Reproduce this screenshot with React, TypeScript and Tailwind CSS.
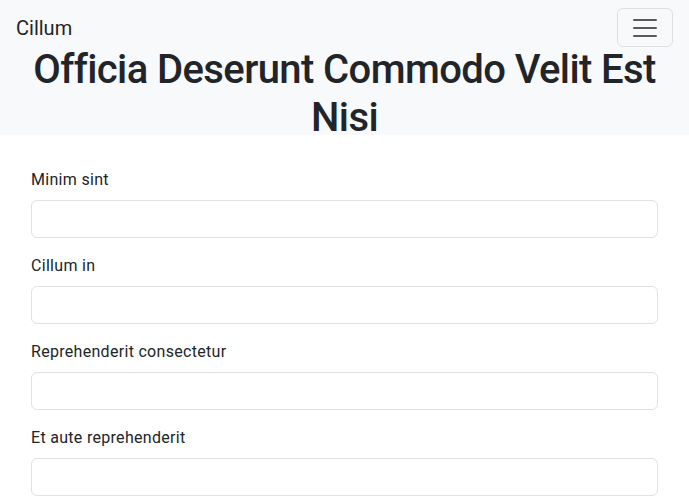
export default function App() {
  const fields = ["Minim sint", "Cillum in", "Reprehenderit consectetur", "Et aute reprehenderit"];

  return (
    <div className="min-h-screen bg-white text-[#212529] font-['Roboto',sans-serif]">
      <nav className="h-[135px] bg-[#f8f9fa]">
        <div className="flex items-center justify-between py-2 pl-4 pr-4">
          <span className="text-xl leading-[30px]">Cillum</span>
          <button
            type="button"
            className="flex h-[39px] w-[56px] items-center justify-center rounded-md border border-[rgba(0,0,0,0.1)]"
          >
            <svg width="30" height="30" viewBox="0 0 30 30">
              <path
                d="M4 7h22M4 15h22M4 23h22"
                stroke="rgba(33,37,41,0.75)"
                strokeWidth="2"
                strokeLinecap="round"
              />
            </svg>
          </button>
        </div>
        <h1 className="-mt-[9px] px-[24px] text-center text-[40px] font-medium leading-[48px] tracking-[-0.6px]">
          Officia Deserunt Commodo Velit Est Nisi
        </h1>
      </nav>

      <form className="pl-[31px] pr-[31px] pt-[33px]">
        {fields.map((label, i) => (
          <div key={label} className="mb-4">
            <label htmlFor={`f${i}`} className="mb-2 block text-base leading-6 tracking-[0.3px]">
              {label}
            </label>
            <input
              id={`f${i}`}
              type="text"
              className="block h-[38px] w-full rounded-md border border-[#dee2e6] bg-white px-3"
            />
          </div>
        ))}
      </form>
    </div>
  );
}
